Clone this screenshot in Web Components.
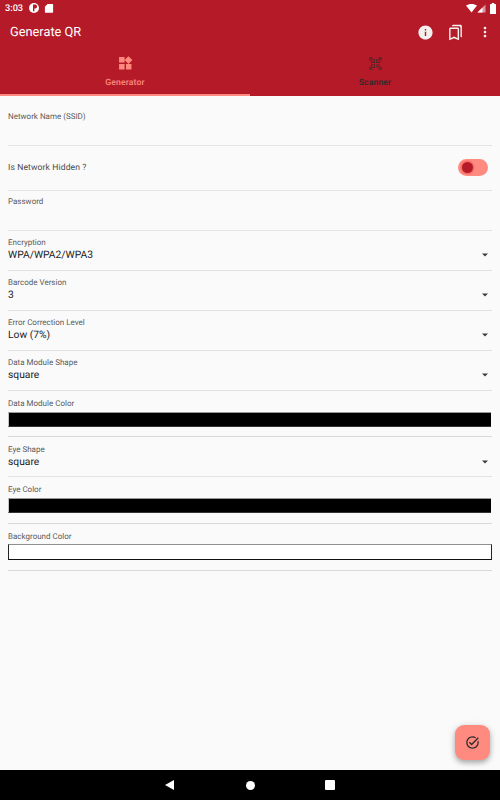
<!DOCTYPE html>
<html><head><meta charset="utf-8"><title>Generate QR</title>
<style>
html,body{margin:0;padding:0;height:100%;}
body{width:500px;height:800px;overflow:hidden;display:flex;flex-direction:column;background:#fafafa;font-family:Roboto,"Noto Sans",sans-serif;color:#1f1f1f;text-rendering:geometricPrecision;}
qr-form{flex:1;}
</style></head>
<body>
<qr-header></qr-header>
<qr-form>
  <qr-text-field label="Network Name (SSID)" pad="15.5" height="50"></qr-text-field>
  <qr-switch-row label="Is Network Hidden ?"></qr-switch-row>
  <qr-text-field label="Password" pad="6" height="40"></qr-text-field>
  <qr-select label="Encryption" value="WPA/WPA2/WPA3"></qr-select>
  <qr-select label="Barcode Version" value="3"></qr-select>
  <qr-select label="Error Correction Level" value="Low (7%)"></qr-select>
  <qr-select label="Data Module Shape" value="square"></qr-select>
  <qr-color label="Data Module Color" color="#000"></qr-color>
  <qr-select label="Eye Shape" value="square"></qr-select>
  <qr-color label="Eye Color" color="#000"></qr-color>
  <qr-color label="Background Color" color="#fff"></qr-color>
  <qr-fab></qr-fab>
</qr-form>
<qr-nav></qr-nav>
<script>
const def=(name,html)=>customElements.define(name,class extends HTMLElement{
  connectedCallback(){
    if(this.shadowRoot)return;
    const r=this.attachShadow({mode:'open'});
    r.innerHTML=typeof html==='function'?html(this):html;
  }
});
const ico=(d,size,color,extra='')=>`<svg width="${size}" height="${size}" viewBox="0 0 24 24" fill="${color}" style="display:block;${extra}"><path d="${d}"/></svg>`;
const base=`*{box-sizing:border-box}.lbl{font:400 8px/10px Roboto,sans-serif;color:#5a5a5a;white-space:nowrap}`;

def('qr-icon-button',`<style>:host{display:flex;width:24px;height:24px;align-items:center;justify-content:center}</style><slot></slot>`);

def('qr-header',`<style>
:host{display:block;height:96px;background:#b51a28;color:#fff;flex:none}
.status{height:16px;display:flex;align-items:center;padding:0 4px 0 5px}
.time{font:500 9.2px/16px Roboto,sans-serif;width:24px;padding-top:1px}
.sp{flex:1}
.bar{height:32px;display:flex;align-items:center;padding:0 3px 0 10px}
.title{font:400 12.8px/20px Roboto,sans-serif;flex:1;white-space:nowrap;margin-top:2px}
.acts{display:flex;gap:6px;align-items:center}
.tabs{display:flex;height:48px}
.tab{flex:1;display:flex;flex-direction:column;align-items:center;padding-top:6px}
.ic{height:18px;display:flex;align-items:center;justify-content:center}
.tab span{font:500 8.6px/12px Roboto,sans-serif;margin-top:5px;letter-spacing:.15px;white-space:nowrap}
.on{color:#ff8a80;border-bottom:2px solid #ff8a80}
.off{color:#2a2a2a}
.off svg{opacity:.7}
</style>
<div class="status">
  <span class="time">3:03</span>
  <svg width="12" height="12" viewBox="0 0 12 12" style="display:block;margin-left:-1px"><circle cx="6" cy="6" r="5" fill="#fff"/><path d="M5 2.600h2.200a1.900 1.900 0 0 1 0 3.800H6.400V9.200H5z" fill="#b51a28"/></svg>
  <svg width="10" height="10" viewBox="0 0 10 10" style="display:block;margin-left:4px"><path d="M3.600 1H8.400a.7.7 0 0 1 .7.7V9a.7.7 0 0 1-.7.7H1.600A.7.7 0 0 1 .9 9V3.700z" fill="#fff"/></svg>
  <span class="sp"></span>
  <svg width="11" height="9" viewBox="0 0 11 9" style="display:block"><path d="M0 1.600C3 -.5 8 -.5 11 1.600L5.500 8.600z" fill="#fff"/></svg>
  <svg width="9" height="9" viewBox="0 0 9 9" style="display:block"><path d="M8.500 .5V8.500H.5z" fill="#fff" opacity=".55"/><path d="M5.500 3.500V8.500H.5z" fill="#fff"/></svg>
  <svg width="6" height="11" viewBox="0 0 6 11" style="display:block;margin-left:4px"><path d="M1.800 0h2.400v1H5.400a.6.6 0 0 1 .6.6V10.400a.6.6 0 0 1-.6.6H.6a.6.6 0 0 1-.6-.6V1.600a.6.6 0 0 1 .6-.6H1.800z" fill="#fff"/></svg>
</div>
<div class="bar">
  <div class="title">Generate QR</div>
  <div class="acts">
    <qr-icon-button>${ico('M12 2C6.480 2 2 6.480 2 12s4.480 10 10 10 10-4.480 10-10S17.520 2 12 2zm1 15h-2v-6h2v6zm0-8h-2V7h2v2z',17,'#f4f0f0')}</qr-icon-button>
    <qr-icon-button>${ico('M15 7v12.970l-4.210-1.810-.79-.34-.79.34L5 19.970V7h10m4-6H8.990C7.890 1 7 1.900 7 3h10c1.100 0 2 .9 2 2v13l2 1V3c0-1.100-.9-2-2-2zm-4 4H5c-1.100 0-2 .9-2 2v16l7-3 7 3V7c0-1.100-.9-2-2-2z',17,'#f4f0f0')}</qr-icon-button>
    <qr-icon-button>${ico('M12 8c1.100 0 2-.9 2-2s-.9-2-2-2-2 .9-2 2 .9 2 2 2zm0 2c-1.100 0-2 .9-2 2s.9 2 2 2 2-.9 2-2-.9-2-2-2zm0 6c-1.100 0-2 .9-2 2s.9 2 2 2 2-.9 2-2-.9-2-2-2z',16,'#f4f0f0')}</qr-icon-button>
  </div>
</div>
<div class="tabs">
  <div class="tab on"><div class="ic">${ico('M13 13v8h8v-8h-8zM3 21h8v-8H3v8zM3 3v8h8V3H3zm13.660-1.310L11 7.340 16.660 13l5.660-5.660-5.660-5.650z',16.5,'#ff8a80')}</div><span>Generator</span></div>
  <div class="tab off"><div class="ic">${ico('M9.500 6.500v3h-3v-3h3M11 5H5v6h6V5zm-1.500 9.500v3h-3v-3h3M11 13H5v6h6v-6zm6.500-6.500v3h-3v-3h3M19 5h-6v6h6V5zm-6 8h1.500v1.500H13V13zm1.500 1.500H16V16h-1.500v-1.500zM16 13h1.500v1.500H16V13zm-3 3h1.500v1.500H13V16zm1.500 1.500H16V19h-1.500v-1.500zM16 16h1.500v1.500H16V16zm1.500-1.500H19V16h-1.500v-1.500zm0 3H19V19h-1.500v-1.500zM22 7h-2V4h-3V2h5v5zm0 15v-5h-2v3h-3v2h5zM2 22h5v-2H4v-3H2v5zM2 2v5h2V4h3V2H2z',15,'#2a2a2a')}</div><span>Scanner</span></div>
</div>`);

def('qr-form',`<style>:host{display:flex;flex-direction:column;padding:0 8px;position:relative}</style><slot></slot>`);

def('qr-text-field',h=>`<style>${base}:host{display:block;height:${h.getAttribute('height')}px;padding-top:${h.getAttribute('pad')}px;border-bottom:1.5px solid #e4e4e4;box-sizing:border-box}</style><div class="lbl">${h.getAttribute('label')}</div>`);

def('qr-switch-row',h=>`<style>${base}:host{display:flex;height:44.5px;align-items:center;justify-content:space-between;border-bottom:1.5px solid #e4e4e4;box-sizing:border-box;padding:0 4px 0 0}
.t{font:400 8.6px/12px Roboto,sans-serif;color:#4a4a4a;letter-spacing:.1px}
.track{width:30px;height:17px;border-radius:9px;background:#ff8a80;display:flex;align-items:center;padding-left:3.5px}
.thumb{width:11px;height:11px;border-radius:50%;background:#b51a28;box-shadow:0 0 0 1.5px #f76c68}</style>
<span class="t">${h.getAttribute('label')}</span><div class="track"><div class="thumb"></div></div>`);

def('qr-select',h=>`<style>${base}:host{display:block;height:40px;padding-top:7.5px;border-bottom:1.5px solid #e2e2e2;box-sizing:border-box}
.v{font:400 10.3px/14px Roboto,sans-serif;color:#1c1c1c;display:flex;justify-content:space-between;align-items:center;padding-right:4.5px}
svg{display:block}</style>
<div class="lbl">${h.getAttribute('label')}</div><div class="v"><span>${h.getAttribute('value')}</span><svg width="6" height="4" viewBox="0 0 6 4"><path d="M0 .5H6L3 3.500z" fill="#3a3a3a"/></svg></div>`);

def('qr-color',h=>{const w=h.getAttribute('color')==='#fff';return `<style>${base}:host{display:block;height:${w?47.5:46.5}px;padding-top:8px;border-bottom:1.5px solid #d8d8d8;box-sizing:border-box}
.sw{margin:${w?2:3}px ${w?0:1}px 0 0;height:${w?16:15}px;background:${h.getAttribute('color')};border-style:solid;${w?'border-width:1.5px 1px 1px 1px;border-color:#8f8f8f #222 #111 #222':'border-width:1px 0 1px 1px;border-color:#999 #000 #333 #c4c4c4'}}</style>
<div class="lbl">${h.getAttribute('label')}</div><div class="sw"></div>`});

def('qr-fab',`<style>:host{position:absolute;right:10px;bottom:10px;width:35px;height:35px;border-radius:9px;background:#ff8a80;display:flex;align-items:center;justify-content:center;box-shadow:0 3px 5px rgba(0,0,0,.25),0 1px 8px rgba(0,0,0,.12)}</style>${ico('M22 5.180L10.590 16.600l-4.240-4.240 1.410-1.410 2.830 2.830 10-10L22 5.180zm-2.210 5.040c.13.570.21 1.170.21 1.780 0 4.420-3.580 8-8 8s-8-3.580-8-8 3.580-8 8-8c1.580 0 3.040.460 4.280 1.250l1.440-1.440C16.100 2.670 14.130 2 12 2 6.480 2 2 6.480 2 12s4.480 10 10 10 10-4.480 10-10c0-1.190-.22-2.330-.6-3.390l-1.610 1.610z',15,'#2a2a2a')}`);

def('qr-nav',`<style>:host{display:flex;height:30px;background:#000;flex:none;align-items:center;justify-content:center}
.row{display:flex;align-items:center;gap:70.5px}
.c{width:9px;height:9px;border-radius:50%;background:#fff}
.s{width:9.5px;height:9.5px;border-radius:1px;background:#fff}</style>
<div class="row"><svg width="10" height="10" viewBox="0 0 10 10" style="display:block"><path d="M0 5 9 0V10z" fill="#fff"/></svg><div class="c"></div><div class="s"></div></div>`);
</script>
</body></html>
